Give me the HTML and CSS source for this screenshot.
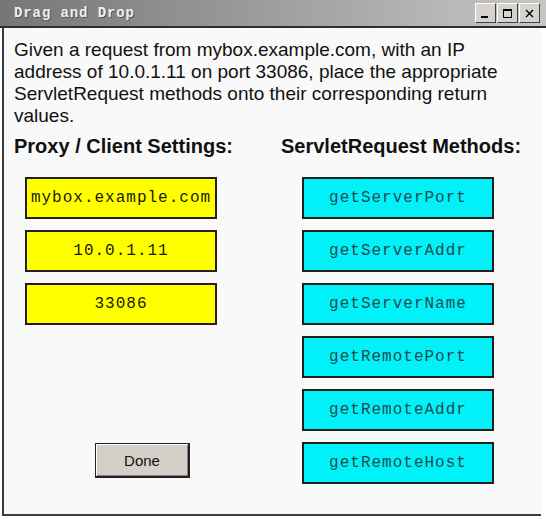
FILE: index.html
```html
<!DOCTYPE html>
<html>
<head>
<meta charset="utf-8">
<link rel="stylesheet" href="styles.css">
</head>
<body>
<div class="window">
  <div class="titlebar">
    <span class="title">Drag and Drop</span>
    <div class="controls">
      <span class="ctl"><svg width="13" height="11" viewBox="0 0 13 11"><rect x="2" y="8" width="7" height="2" fill="#000"/></svg></span>
      <span class="ctl"><svg width="13" height="11" viewBox="0 0 13 11"><rect x="2.5" y="1.5" width="8" height="8" fill="none" stroke="#000"/><rect x="2" y="1" width="9" height="2" fill="#000"/></svg></span>
      <span class="ctl"><svg width="13" height="11" viewBox="0 0 13 11"><path d="M3 2 L10 9 M10 2 L3 9" stroke="#000" stroke-width="1.4"/></svg></span>
    </div>
  </div>
  <div class="content">
    <p class="question">Given a request from mybox.example.com, with an IP<br>address of 10.0.1.11 on port 33086, place the appropriate<br>ServletRequest methods onto their corresponding return<br>values.</p>
    <div class="columns">
      <div class="col col-left">
        <h2 class="heading">Proxy / Client Settings:</h2>
        <div class="boxes">
          <div class="box yellow">mybox.example.com</div>
          <div class="box yellow">10.0.1.11</div>
          <div class="box yellow">33086</div>
        </div>
        <div class="btn-row"><button class="done">Done</button></div>
      </div>
      <div class="col col-right">
        <h2 class="heading">ServletRequest Methods:</h2>
        <div class="boxes">
          <div class="box cyan">getServerPort</div>
          <div class="box cyan">getServerAddr</div>
          <div class="box cyan">getServerName</div>
          <div class="box cyan">getRemotePort</div>
          <div class="box cyan">getRemoteAddr</div>
          <div class="box cyan">getRemoteHost</div>
        </div>
      </div>
    </div>
  </div>
</div>
</body>
</html>
```
FILE: styles.css
```css
html, body {
  margin: 0;
  padding: 0;
  background: #ffffff;
}
.window {
  width: 546px;
  height: 516px;
  display: flex;
  flex-direction: column;
}
.titlebar {
  height: 26px;
  flex: none;
  border-bottom: 2px solid #2e2e2e;
  background: linear-gradient(to right, #767676 0%, #9a9a9a 45%, #c6c6c6 100%);
  display: flex;
  align-items: center;
  justify-content: space-between;
  padding-left: 14px;
  padding-right: 6px;
}
.title {
  font-family: "Liberation Mono", monospace;
  font-weight: bold;
  font-size: 14px;
  letter-spacing: 0.9px;
  color: #f0f0f0;
  text-shadow: 1px 1px 0 #555;
}
.controls {
  display: flex;
  gap: 1px;
}
.ctl {
  width: 21px;
  height: 20px;
  box-sizing: border-box;
  background: #d6d3cd;
  border: 1px solid;
  border-color: #fff #404040 #404040 #fff;
  display: flex;
  align-items: center;
  justify-content: center;
}
.content {
  flex: 1;
  margin-left: 2px;
  width: 539px;
  border-left: 2px solid #3c3c3c;
  border-bottom: 2px solid #3c3c3c;
  background: #f9f9f9;
  padding: 11px 0 0 10px;
  box-sizing: border-box;
}
.question {
  margin: 0;
  font-family: "Liberation Sans", Arial, sans-serif;
  font-size: 19px;
  line-height: 22px;
  color: #111;
}
.columns {
  display: flex;
  margin-top: 8px;
}
.col-left {
  width: 267px;
}
.heading {
  margin: 0;
  font-family: "Liberation Sans", Arial, sans-serif;
  font-weight: bold;
  font-size: 20px;
  line-height: 22px;
  color: #111;
}
.boxes {
  display: flex;
  flex-direction: column;
  gap: 11px;
  margin-top: 20px;
}
.col-left .boxes {
  padding-left: 11px;
}
.col-right .boxes {
  padding-left: 21px;
}
.box {
  width: 192px;
  height: 42px;
  box-sizing: border-box;
  border: 2px solid #202020;
  display: flex;
  align-items: center;
  justify-content: center;
  font-family: "Liberation Mono", "Courier New", monospace;
  font-size: 16px;
  letter-spacing: 1px;
}
.yellow {
  background: #ffff00;
  color: #1a1a00;
}
.cyan {
  background: #00f2f8;
  color: #1e4a50;
}
.btn-row {
  padding-left: 81px;
  margin-top: 118px;
}
.done {
  width: 95px;
  height: 35px;
  background: #d4d0c8;
  border: 1px solid #222;
  border-right-width: 2px;
  border-bottom-width: 2px;
  box-shadow: inset 1px 1px 0 #fff, inset -1px -1px 0 #808080;
  font-family: "Liberation Sans", Arial, sans-serif;
  font-size: 15px;
  color: #111;
  padding: 0;
}
```
